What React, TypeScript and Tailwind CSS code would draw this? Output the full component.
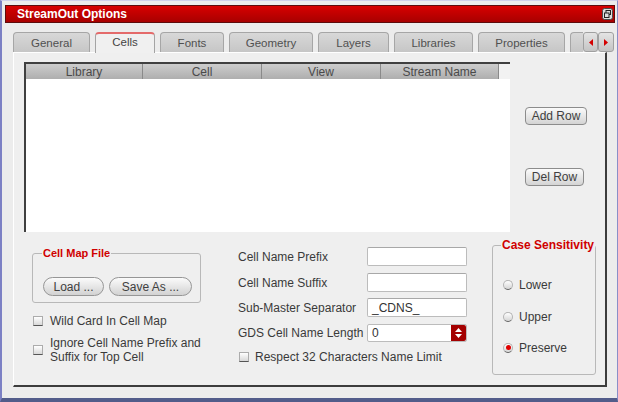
import React from "react";

const tabs: { label: string; w: string; active?: boolean }[] = [
  { label: "General", w: "w-[77px]" },
  { label: "Cells", w: "w-[60px]", active: true },
  { label: "Fonts", w: "w-[64px]" },
  { label: "Geometry", w: "w-[84px]" },
  { label: "Layers", w: "w-[71px]" },
  { label: "Libraries", w: "w-[79px]" },
  { label: "Properties", w: "w-[87px]" },
];

function Check() {
  return (
    <span className="block w-[10px] h-[10px] shrink-0 border border-[#acacac] border-b-[#555555] bg-linear-to-b from-[#ffffff] to-[#d8d8d8]" />
  );
}

function Radio({ checked }: { checked?: boolean }) {
  return (
    <span className="flex w-[10px] h-[10px] shrink-0 items-center justify-center rounded-full border border-[#b4b4b4] border-b-[#606060] bg-linear-to-b from-[#ffffff] to-[#d4d4d4]">
      {checked && <span className="block w-[5px] h-[5px] rounded-full bg-[#e00000]" />}
    </span>
  );
}

function Field({ value }: { value?: string }) {
  return (
    <div className="w-[100px] h-[19px] bg-white border border-[#bcbcbc] border-t-[#a8a8a8] rounded-[2px] flex items-center pl-[4px] text-[12px] text-[#333]">
      {value}
    </div>
  );
}

export default function App() {
  return (
    <div className="w-[618px] h-[402px] overflow-hidden bg-[#ececec] border-l-2 border-l-[#7c80c4] border-r border-r-[#8a8ec8] border-t border-t-[#cfd0ea] border-b-4 border-b-[#525c8a] font-['Liberation_Sans',Arial,sans-serif] text-[#3a3a3a] flex flex-col">
      {/* Title bar */}
      <div className="mt-[4px] ml-[3px] mr-[2px] h-[18px] shrink-0 border border-[#5c0c0c] bg-linear-to-b from-[#d80000] to-[#a80000] flex items-center justify-between pl-[11px] pr-[1px]">
        <span className="text-white font-bold text-[12px] leading-none">StreamOut Options</span>
        <svg width="11" height="12" viewBox="0 0 11 12">
          <rect x="0.5" y="0.5" width="10" height="11" rx="2" fill="#dcdcdc" stroke="#4a4a4a" />
          <rect x="4" y="2.5" width="4.5" height="4" fill="none" stroke="#222" strokeWidth="1" />
          <rect x="2.5" y="5" width="4.5" height="4.5" fill="#dcdcdc" stroke="#222" strokeWidth="1" />
        </svg>
      </div>

      {/* Tabs */}
      <div className="mt-[9px] ml-[11px] h-[20px] shrink-0 flex items-start gap-[5px]">
        {tabs.map((t) =>
          t.active ? (
            <div
              key={t.label}
              className={`${t.w} relative z-10 h-[21px] rounded-t-[4px] border border-[#a4a4a4] border-b-0 border-t-2 border-t-[#e46a6a] bg-[#f0f0f0] flex items-center justify-center text-[11.5px] text-[#444] pb-[1px]`}
            >
              {t.label}
            </div>
          ) : (
            <div
              key={t.label}
              className={`${t.w} h-[20px] rounded-t-[4px] border border-[#a6a6a6] border-b-0 bg-linear-to-b from-[#d8d8d8] to-[#c6c6c6] flex items-center justify-center text-[11.5px] text-[#505050] pt-[2px]`}
            >
              {t.label}
            </div>
          )
        )}
        <div className="flex">
          <div className="w-[13px] h-[20px] rounded-tl-[4px] border border-[#a6a6a6] border-b-0 border-r-0 bg-linear-to-b from-[#d8d8d8] to-[#c6c6c6]" />
          <div className="w-[15px] h-[20px] rounded-[3px] border border-[#a0a0a0] bg-linear-to-b from-[#e4e4e4] to-[#c4c4c4] flex items-center justify-center">
            <svg width="4" height="7" viewBox="0 0 4 7"><polygon points="4,0 4,7 0,3.5" fill="#d40000" /></svg>
          </div>
          <div className="w-[16px] h-[20px] rounded-[3px] border border-[#a0a0a0] bg-linear-to-b from-[#e4e4e4] to-[#c4c4c4] flex items-center justify-center">
            <svg width="4" height="7" viewBox="0 0 4 7"><polygon points="0,0 4,3.5 0,7" fill="#d40000" /></svg>
          </div>
        </div>
      </div>

      {/* Panel */}
      <div className="ml-[11px] w-[594px] h-[335px] shrink-0 bg-[#efefef] border-l border-l-white border-t border-t-white border-r-2 border-r-[#3c3c3c] border-b-2 border-b-[#3c3c3c] pl-[10px] pt-[9px]">
        {/* Top: table + buttons */}
        <div className="flex items-start">
          <div className="w-[486px] h-[170px] bg-white border-t-2 border-l-2 border-[#404040] flex flex-col">
            <div className="h-[15px] flex bg-[#f2f2f2] text-[12px] text-[#4a4a4a]">
              {[
                ["Library", "w-[117px]"],
                ["Cell", "w-[119px]"],
                ["View", "w-[119px]"],
                ["Stream Name", "w-[118px]"],
              ].map(([l, w]) => (
                <div
                  key={l}
                  className={`${w} h-full flex items-center justify-center bg-linear-to-b from-[#cdcdcd] to-[#aeaeae] border-r border-r-[#8a8a8a] leading-none`}
                >
                  {l}
                </div>
              ))}
            </div>
          </div>
          <div className="ml-[15px] flex flex-col items-start">
            <button className="mt-[45px] w-[62px] h-[18px] rounded-[4px] border border-[#8c8c8c] bg-linear-to-b from-[#fbfbfb] to-[#d4d4d4] text-[12px] text-[#404040] leading-none flex items-center justify-center">
              Add Row
            </button>
            <button className="mt-[43px] w-[59px] h-[18px] rounded-[4px] border border-[#8c8c8c] bg-linear-to-b from-[#fbfbfb] to-[#d4d4d4] text-[12px] text-[#404040] leading-none flex items-center justify-center">
              Del Row
            </button>
          </div>
        </div>

        {/* Bottom */}
        <div className="mt-[13px] flex items-start text-[12px]">
          {/* Left */}
          <div className="ml-[8px] mt-[8px] w-[169px] flex flex-col">
            <div className="relative h-[50px] border border-[#b8b8b8] rounded-[3px] pl-[10px] pt-[23px] flex gap-[5px]">
              <span className="absolute -top-[7px] left-[9px] px-[1px] bg-[#efefef] text-[11px] font-bold leading-[13px] text-[#d00000]">
                Cell Map File
              </span>
              <button className="w-[61px] h-[19px] rounded-full border border-[#969696] bg-linear-to-b from-[#fbfbfb] to-[#d2d2d2] text-[12px] text-[#404040] leading-none flex items-center justify-center">
                Load ...
              </button>
              <button className="w-[83px] h-[19px] rounded-full border border-[#969696] bg-linear-to-b from-[#fbfbfb] to-[#d2d2d2] text-[12px] text-[#404040] leading-none flex items-center justify-center">
                Save As ...
              </button>
            </div>
            <div className="mt-[10px] h-[15px] ml-[1px] flex items-center gap-[7px]">
              <Check />
              <span className="leading-none whitespace-nowrap">Wild Card In Cell Map</span>
            </div>
            <div className="mt-[8px] ml-[1px] flex items-center gap-[7px]">
              <Check />
              <span className="leading-[14px] whitespace-nowrap">
                Ignore Cell Name Prefix and
                <br />
                Suffix for Top Cell
              </span>
            </div>
          </div>

          {/* Middle */}
          <div className="ml-[37px] mt-[2px] w-[229px] flex flex-col">
            <div className="flex items-center h-[19px]">
              <span className="w-[129px] whitespace-nowrap">Cell Name Prefix</span>
              <Field />
            </div>
            <div className="mt-[7px] flex items-center h-[19px]">
              <span className="w-[129px] whitespace-nowrap">Cell Name Suffix</span>
              <Field />
            </div>
            <div className="mt-[6px] flex items-center h-[19px]">
              <span className="w-[129px] whitespace-nowrap">Sub-Master Separator</span>
              <Field value="_CDNS_" />
            </div>
            <div className="mt-[7px] flex items-center h-[18px]">
              <span className="w-[129px] whitespace-nowrap">GDS Cell Name Length</span>
              <div className="w-[100px] h-[18px] bg-white border border-[#bcbcbc] rounded-[2px] flex items-center justify-between pl-[4px] text-[#333]">
                <span>0</span>
                <div className="w-[15px] h-full bg-[#a40000] rounded-r-[2px] flex flex-col items-center justify-center gap-[2px]">
                  <svg width="7" height="4" viewBox="0 0 7 4"><polygon points="0,4 3.5,0 7,4" fill="#fff" /></svg>
                  <svg width="7" height="4" viewBox="0 0 7 4"><polygon points="0,0 7,0 3.5,4" fill="#fff" /></svg>
                </div>
              </div>
            </div>
            <div className="mt-[7px] h-[15px] ml-[1px] flex items-center gap-[6px]">
              <Check />
              <span className="leading-none whitespace-nowrap">Respect 32 Characters Name Limit</span>
            </div>
          </div>

          {/* Right */}
          <div className="ml-[25px] relative w-[104px] h-[130px] border border-[#b8b8b8] rounded-[3px] pl-[10px] pt-[31px] flex flex-col">
            <span className="absolute -top-[8px] left-[8px] px-[1px] bg-[#efefef] text-[12px] font-bold leading-[14px] text-[#d00000] whitespace-nowrap">
              Case Sensitivity
            </span>
            <div className="h-[15px] flex items-center gap-[6px]">
              <Radio />
              <span className="leading-none">Lower</span>
            </div>
            <div className="mt-[17px] h-[15px] flex items-center gap-[6px]">
              <Radio />
              <span className="leading-none">Upper</span>
            </div>
            <div className="mt-[16px] h-[15px] flex items-center gap-[6px]">
              <Radio checked />
              <span className="leading-none">Preserve</span>
            </div>
          </div>
        </div>
      </div>
    </div>
  );
}
